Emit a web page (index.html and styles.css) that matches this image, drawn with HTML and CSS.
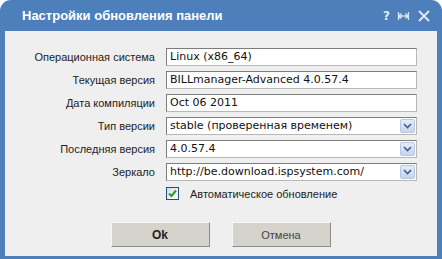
FILE: index.html
```html
<!DOCTYPE html>
<html>
  <head>
    <link rel="stylesheet" href="styles.css">
    <title>Настройки обновления панели</title>
  </head>
  <body>
    <div class="window">
      <div class="window-title">
        <label>Настройки обновления панели</label>
        <div class="title-tools">
          <span class="tool-help">?</span>
          <svg class="tool-icon" width="13" height="12" viewBox="0 0 13 12">
            <path d="M1.5 2v8M11.5 2v8M2 6h9M4.5 3.5L2 6l2.5 2.5M8.5 3.5L11 6l-2.5 2.5" fill="none" stroke="#dbe5f1" stroke-width="1.3"/>
          </svg>
          <svg class="tool-icon" width="14" height="14" viewBox="0 0 14 14">
            <path d="M2 2l10 10M12 2L2 12" fill="none" stroke="#e4ecf6" stroke-width="1.8"/>
          </svg>
        </div>
      </div>

      <div class="window-body">
        <div class="form-grid">
          <label class="form-label">Операционная система</label>
          <div class="field">Linux (x86_64)</div>

          <label class="form-label">Текущая версия</label>
          <div class="field">BILLmanager-Advanced 4.0.57.4</div>

          <label class="form-label">Дата компиляции</label>
          <div class="field">Oct 06 2011</div>

          <label class="form-label">Тип версии</label>
          <div class="field field-select">
            <span>stable (проверенная временем)</span>
            <span class="select-btn"><svg width="9" height="6" viewBox="0 0 9 6"><path d="M1 1l3.5 3.5L8 1" fill="none" stroke="#3d5f8f" stroke-width="1.6"/></svg></span>
          </div>

          <label class="form-label">Последняя версия</label>
          <div class="field field-select">
            <span>4.0.57.4</span>
            <span class="select-btn"><svg width="9" height="6" viewBox="0 0 9 6"><path d="M1 1l3.5 3.5L8 1" fill="none" stroke="#3d5f8f" stroke-width="1.6"/></svg></span>
          </div>

          <label class="form-label">Зеркало</label>
          <div class="field field-select">
            <span>http://be.download.ispsystem.com/</span>
            <span class="select-btn"><svg width="9" height="6" viewBox="0 0 9 6"><path d="M1 1l3.5 3.5L8 1" fill="none" stroke="#3d5f8f" stroke-width="1.6"/></svg></span>
          </div>

          <span></span>
          <div class="check-row">
            <span class="checkbox"><svg width="11" height="11" viewBox="0 0 11 11"><path d="M2 5.5l2.5 2.5L9 2.5" fill="none" stroke="#21a121" stroke-width="2"/></svg></span>
            <label>Автоматическое обновление</label>
          </div>
        </div>

        <div class="button-row">
          <button class="btn btn-ok">Ok</button>
          <button class="btn">Отмена</button>
        </div>
      </div>
    </div>
  </body>
</html>
```

FILE: styles.css
```css
body {
  margin: 0;
  background: #ffffff;
}

.window {
  width: 442px;
  height: 259px;
  box-sizing: border-box;
  background: #4d7fbb;
  border-radius: 11px 11px 0 0;
  padding: 0 5px 3px 5px;
  display: flex;
  flex-direction: column;
}

.window-title {
  height: 31px;
  display: flex;
  align-items: center;
  justify-content: space-between;
  padding: 0 6px 0 17px;
  color: #ffffff;
  font-family: "Liberation Sans", Arial, sans-serif;
  font-size: 13px;
  font-weight: bold;
}

.title-tools {
  display: flex;
  align-items: center;
  gap: 7px;
}

.tool-help {
  font-family: "DejaVu Sans", sans-serif;
  font-size: 12px;
  font-weight: bold;
  color: #e4ecf6;
}

.window-body {
  flex: 1;
  background: #efefef;
  padding-top: 17px;
}

.form-grid {
  display: grid;
  grid-template-columns: 150px 251px;
  column-gap: 11px;
  row-gap: 5px;
  align-items: center;
}

.form-label {
  text-align: right;
  font-family: "Liberation Sans", Arial, sans-serif;
  font-size: 11px;
  color: #222222;
}

.field {
  height: 18px;
  box-sizing: border-box;
  background: #ffffff;
  border: 1px solid;
  border-color: #7d7d7d #b8b8b8 #b8b8b8 #7d7d7d;
  padding: 0 3px;
  font-family: "DejaVu Sans", Verdana, sans-serif;
  font-size: 11px;
  line-height: 16px;
  color: #111111;
  white-space: nowrap;
  overflow: hidden;
}

.field-select {
  display: flex;
  justify-content: space-between;
  align-items: center;
  padding-right: 1px;
}

.select-btn {
  width: 15px;
  height: 14px;
  box-sizing: border-box;
  border: 1px solid #b7c9e2;
  border-radius: 2px;
  background: linear-gradient(#e4ecf7, #c4d5ec);
  display: flex;
  align-items: center;
  justify-content: center;
}

.check-row {
  display: flex;
  align-items: center;
  gap: 11px;
  margin-top: 1px;
  font-family: "Liberation Sans", Arial, sans-serif;
  font-size: 11px;
  color: #222222;
}

.checkbox {
  width: 13px;
  height: 13px;
  box-sizing: border-box;
  border: 1px solid #1c5180;
  background: linear-gradient(135deg, #dcdcd6, #ffffff);
  display: flex;
  align-items: center;
  justify-content: center;
}

.button-row {
  display: flex;
  justify-content: center;
  gap: 22px;
  margin-top: 22px;
  padding-right: 1px;
}

.btn {
  width: 99px;
  height: 25px;
  background: #d6d3cc;
  border: 1px solid;
  border-color: #f7f7f5 #8e8c86 #8e8c86 #f7f7f5;
  font-family: "Liberation Sans", Arial, sans-serif;
  font-size: 11px;
  color: #444444;
  cursor: pointer;
}

.btn-ok {
  font-size: 12px;
  font-weight: bold;
  color: #222222;
}
```
